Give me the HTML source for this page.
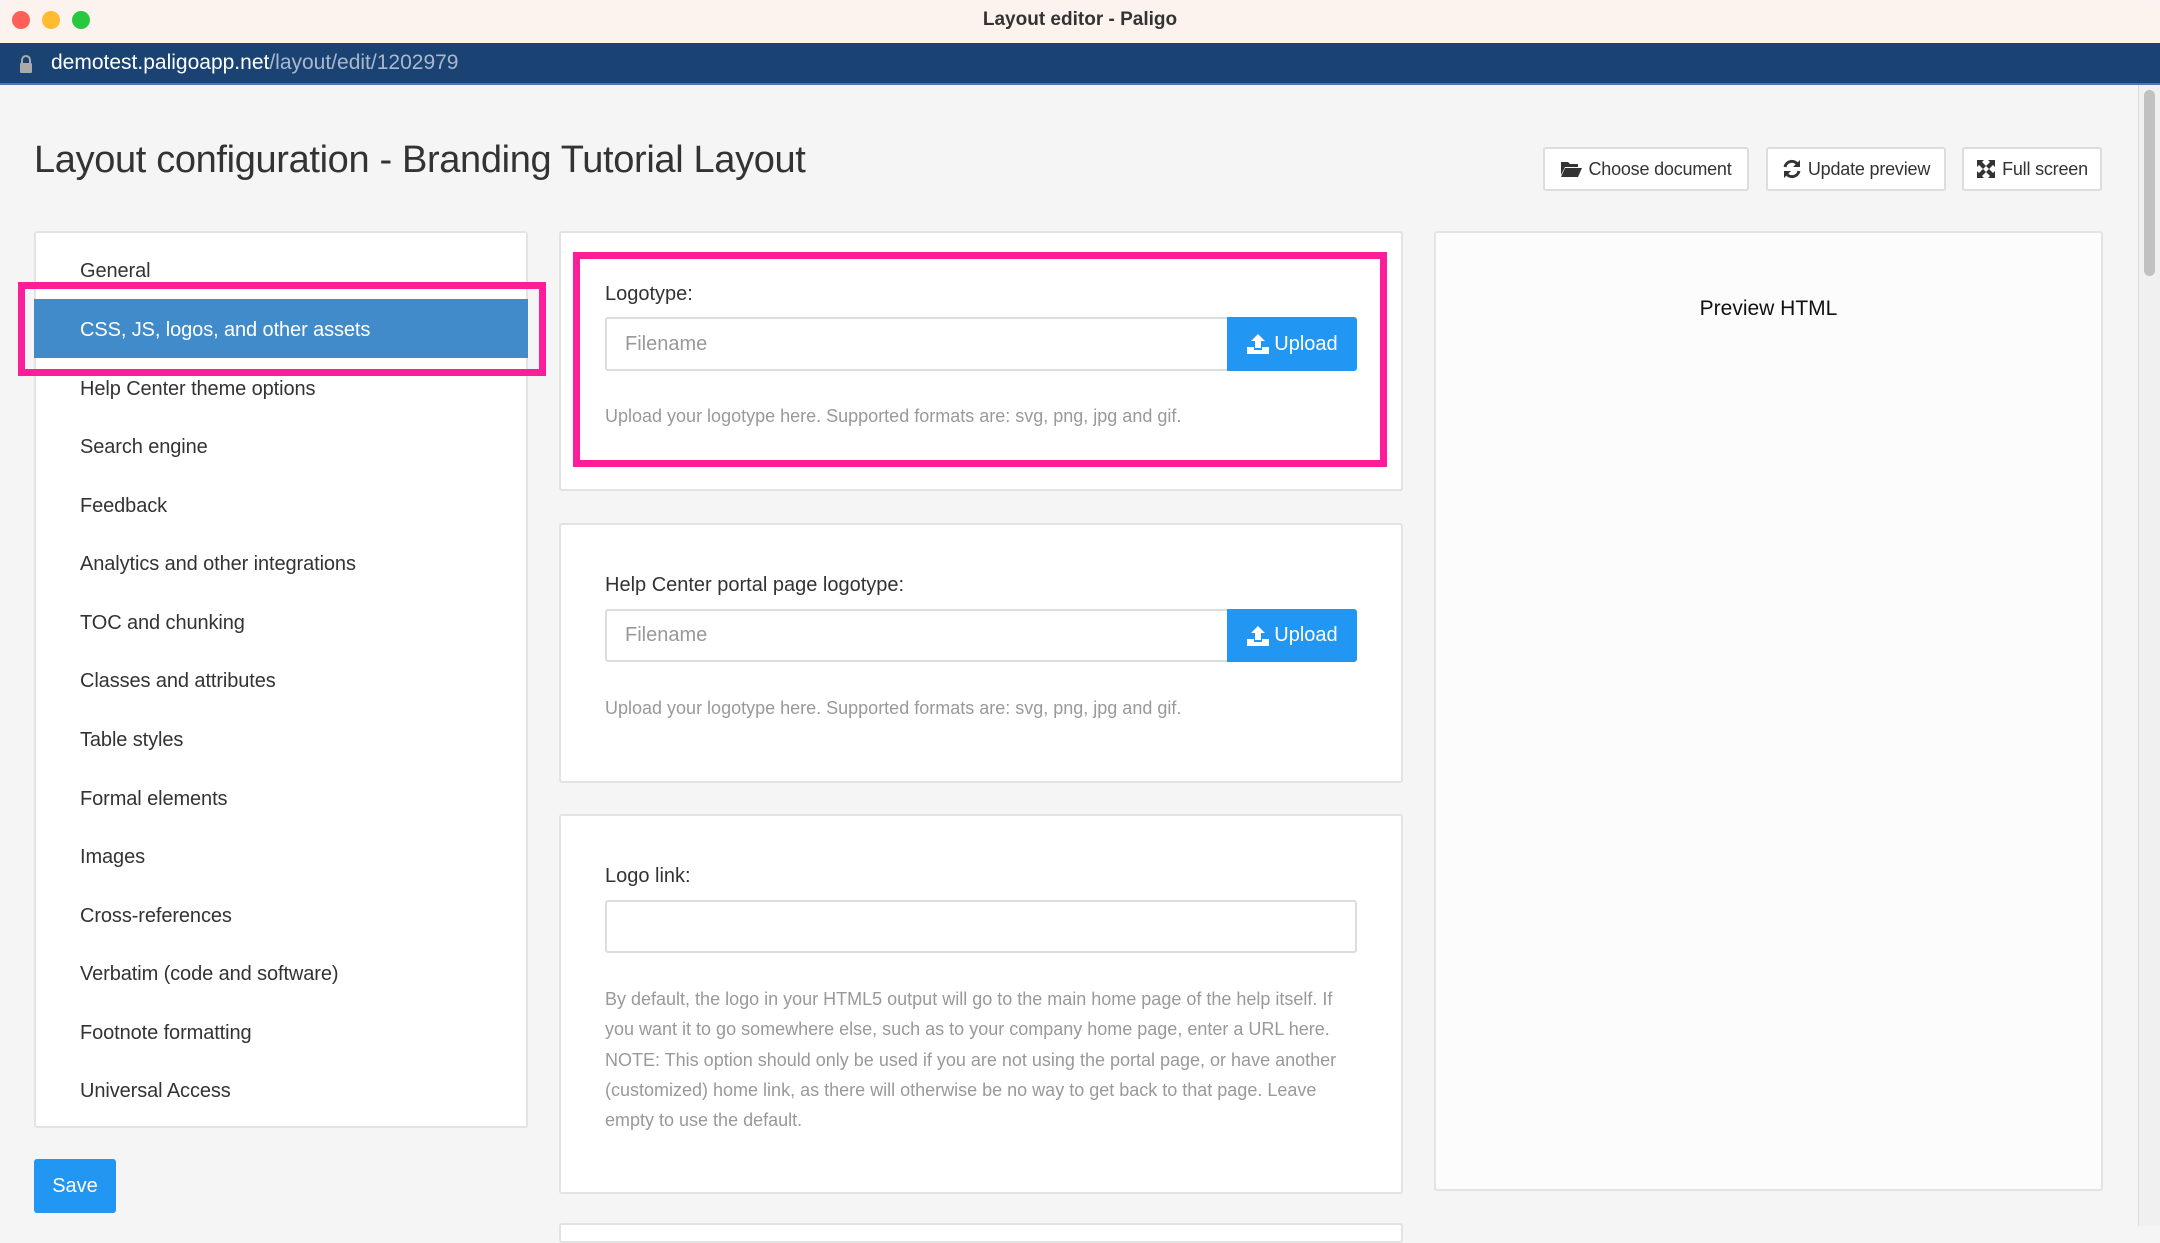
<!DOCTYPE html>
<html><head><meta charset="utf-8"><style>
*{box-sizing:border-box;margin:0;padding:0}
body{width:2160px;height:1226px;overflow:hidden;background:#f5f5f5;font-family:"Liberation Sans",sans-serif;position:relative;color:#333}
.a{position:absolute}
.panel{position:absolute;background:#fff;border:2px solid #e3e3e3;border-radius:3px}
.nav{position:absolute;left:80px;font-size:20px;color:#333;line-height:24px;letter-spacing:-0.1px}
.lbl{position:absolute;left:605px;font-size:20px;color:#333}
.inp{position:absolute;left:605px;background:#fff;border:2px solid #ddd;border-radius:3px;font-size:20px;color:#999;padding-left:18px;display:flex;align-items:center}
.up{position:absolute;left:1227px;width:130px;background:#2196f3;color:#fff;font-size:20px;display:flex;align-items:center;justify-content:center;border-radius:0 3px 3px 0}
.help{position:absolute;left:605px;font-size:18px;color:#999}
.btn{position:absolute;top:147px;height:44px;background:#fff;border:2px solid #ddd;border-radius:3px;font-size:18px;color:#333;display:flex;align-items:center;justify-content:center;gap:6px;letter-spacing:-0.2px}
.pink{position:absolute;border:7px solid #ff1e9a}
</style></head><body>
<div class="a" style="left:0;top:0;width:2160px;height:43px;background:#fcf3ee;border-radius:10px 10px 0 0"></div>
<div class="a" style="left:21px;top:20px;width:18px;height:18px;margin:-9px;border-radius:50%;background:#fe5f57"></div>
<div class="a" style="left:51px;top:20px;width:18px;height:18px;margin:-9px;border-radius:50%;background:#febc2e"></div>
<div class="a" style="left:81px;top:20px;width:18px;height:18px;margin:-9px;border-radius:50%;background:#28c840"></div>
<div class="a" style="left:0;top:9px;width:2160px;text-align:center;font-size:19px;font-weight:bold;color:#333">Layout editor - Paligo</div>
<div class="a" style="left:0;top:43px;width:2160px;height:42px;background:#1a4272;border-bottom:2px solid #4a78b0"></div>
<svg class="a" style="left:19px;top:54px" width="14" height="20" viewBox="0 0 14 20"><path d="M3 9V6a4 4 0 0 1 8 0v3" stroke="#aaa" stroke-width="2" fill="none"/><rect x="1" y="9" width="12" height="10" rx="1" fill="#aaa"/></svg>
<div class="a" style="left:51px;top:51px;font-size:21px;color:#fff">demotest.paligoapp.net<span style="color:#aab8cc">/layout/edit/1202979</span></div>
<div class="a" style="left:2138px;top:85px;width:22px;height:1141px;background:#f0f0f0;border-left:1px solid #ddd"></div>
<div class="a" style="left:2144px;top:90px;width:11px;height:186px;background:#c1c1c1;border-radius:6px"></div>
<div class="a" style="left:34px;top:139px;font-size:38px;color:#333;letter-spacing:-0.35px">Layout configuration - Branding Tutorial Layout</div>
<div class="btn" style="left:1543px;width:206px"><svg width="22" height="18" viewBox="0 0 22 18"><path d="M1 2h7l2 2h8v3H5L1 15z" fill="#333"/><path d="M5 8h17l-4 9H1z" fill="#333"/></svg>Choose document</div>
<div class="btn" style="left:1766px;width:180px"><svg width="20" height="20" viewBox="0 0 20 20"><path d="M16 6A7 7 0 0 0 3 8" stroke="#333" stroke-width="3" fill="none"/><path d="M18 1v7h-7z" fill="#333"/><path d="M4 14a7 7 0 0 0 13-2" stroke="#333" stroke-width="3" fill="none"/><path d="M2 19v-7h7z" fill="#333"/></svg>Update preview</div>
<div class="btn" style="left:1962px;width:140px"><svg width="20" height="20" viewBox="0 0 20 20"><path d="M1 1h7L6 3l4 4-3 3-4-4-2 2zM19 1v7l-2-2-4 4-3-3 4-4-2-2zM1 19v-7l2 2 4-4 3 3-4 4 2 2zM19 19h-7l2-2-4-4 3-3 4 4 2-2z" fill="#333"/></svg>Full screen</div>
<div class="panel" style="left:34px;top:231px;width:494px;height:897px"></div>
<div class="a" style="left:34px;top:299px;width:494px;height:59px;background:#428bca"></div>
<div class="pink" style="left:18px;top:282px;width:528px;height:94px"></div>
<div class="nav" style="top:259px">General</div>
<div class="nav" style="top:318px;color:#fff">CSS, JS, logos, and other assets</div>
<div class="nav" style="top:377px">Help Center theme options</div>
<div class="nav" style="top:435px">Search engine</div>
<div class="nav" style="top:494px">Feedback</div>
<div class="nav" style="top:552px">Analytics and other integrations</div>
<div class="nav" style="top:611px">TOC and chunking</div>
<div class="nav" style="top:669px">Classes and attributes</div>
<div class="nav" style="top:728px">Table styles</div>
<div class="nav" style="top:787px">Formal elements</div>
<div class="nav" style="top:845px">Images</div>
<div class="nav" style="top:904px">Cross-references</div>
<div class="nav" style="top:962px">Verbatim (code and software)</div>
<div class="nav" style="top:1021px">Footnote formatting</div>
<div class="nav" style="top:1079px">Universal Access</div>
<div class="a" style="left:34px;top:1159px;width:82px;height:54px;background:#2196f3;border-radius:3px;color:#fff;font-size:20px;display:flex;align-items:center;justify-content:center">Save</div>
<div class="panel" style="left:559px;top:231px;width:844px;height:260px"></div>
<div class="panel" style="left:559px;top:523px;width:844px;height:260px"></div>
<div class="panel" style="left:559px;top:814px;width:844px;height:380px"></div>
<div class="panel" style="left:559px;top:1223px;width:844px;height:20px"></div>
<div class="pink" style="left:573px;top:252px;width:814px;height:215px"></div>
<div class="lbl" style="top:283px">Logotype:</div>
<div class="inp" style="top:317px;width:624px;height:54px">Filename</div>
<div class="up" style="top:317px;height:54px"><svg width="24" height="22" viewBox="0 0 24 22" style="margin-right:4px"><path d="M12 1l-7 7h4v7h6V8h4z" fill="#fff"/><path d="M1 14h7v3h8v-3h7v7H1z" fill="#fff"/></svg>Upload</div>
<div class="help" style="top:406px">Upload your logotype here. Supported formats are: svg, png, jpg and gif.</div>
<div class="lbl" style="top:574px">Help Center portal page logotype:</div>
<div class="inp" style="top:609px;width:624px;height:53px">Filename</div>
<div class="up" style="top:609px;height:53px"><svg width="24" height="22" viewBox="0 0 24 22" style="margin-right:4px"><path d="M12 1l-7 7h4v7h6V8h4z" fill="#fff"/><path d="M1 14h7v3h8v-3h7v7H1z" fill="#fff"/></svg>Upload</div>
<div class="help" style="top:698px">Upload your logotype here. Supported formats are: svg, png, jpg and gif.</div>
<div class="lbl" style="top:865px">Logo link:</div>
<div class="inp" style="top:900px;width:752px;height:53px"></div>
<div class="help" style="top:984px;width:742px;line-height:30.3px">By default, the logo in your HTML5 output will go to the main home page of the help itself. If you want it to go somewhere else, such as to your company home page, enter a URL here. NOTE: This option should only be used if you are not using the portal page, or have another (customized) home link, as there will otherwise be no way to get back to that page. Leave empty to use the default.</div>
<div class="panel" style="left:1434px;top:231px;width:669px;height:960px;background:#fcfcfc"></div>
<div class="a" style="left:1434px;top:297px;width:669px;text-align:center;font-size:21px;color:#111">Preview HTML</div>
</body></html>
